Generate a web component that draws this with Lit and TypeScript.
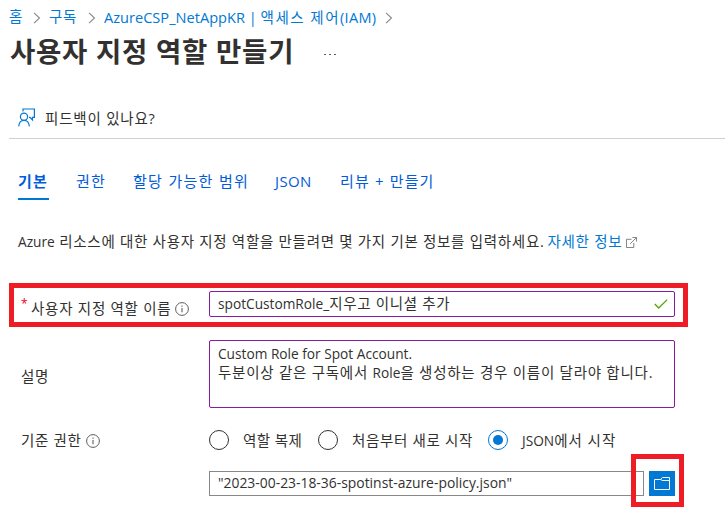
import { LitElement, html, css, svg } from "lit";
import { customElement } from "lit/decorators.js";

const chevron = svg`<svg class="chev" width="8" height="12" viewBox="0 0 8 12"><path d="M1 .8 6.5 6 1 11.2" fill="none" stroke="#8a8886" stroke-width="1.1"/></svg>`;
const info = svg`<svg class="info" width="14" height="14" viewBox="0 0 14 14"><circle cx="7" cy="7" r="6.4" fill="none" stroke="#605e5c" stroke-width="1"/><path d="M7 6v4.3M7 3.6v1.2" stroke="#605e5c" stroke-width="1.1"/></svg>`;

@customElement("app-root")
export class AppRoot extends LitElement {
  static styles = css`
    :host {
      display: block; position: relative; width: 725px; height: 514px; overflow: hidden;
      background: #fff; color: #323130; box-sizing: border-box;
      font: 400 14.5px/20px "Open Sans", "Noto Sans CJK KR", sans-serif;
      letter-spacing: .68px;
    }
    * { box-sizing: border-box; }
    div, span, h1, a { white-space: nowrap; }
    svg { display: block; flex: none; }
    .en { font-size: 13.7px; letter-spacing: 0; }
    .crumbs { display: flex; align-items: center; height: 34px; padding-left: 9px; color: #0078d4; }
    .crumbs .chev { margin-top: 1px; }
    .c0 { width: 24px; }
    .c1 { width: 39px; }
    .c2 { width: 281px; }
    .s { width: 16px; display: flex; }
    .crumbs .en { font-size: 14.6px; }
    .iam { letter-spacing: 1.5px; }
    .paren { letter-spacing: .3px; }
    .head { display: flex; height: 36px; align-items: center; padding-left: 10px; }
    h1 { margin: 0; width: 314px; font-size: 27.5px; line-height: 36px; font-weight: 700; letter-spacing: .75px; }
    .dots { display: flex; gap: 3px; margin-top: 4px; }
    .dots i { width: 2px; height: 1px; background: #605e5c; }
    .cmd { display: flex; align-items: center; height: 43px; margin: 26px 0 0 9px; padding-left: 9px; border-bottom: 1px solid #d2d0ce; }
    .cmd span { margin: 3px 0 0 9px; letter-spacing: .8px; }
    .tabs { display: flex; margin: 32px 0 0 18px; color: #015cda; font-size: 15px; letter-spacing: 1.15px; }
    .tab { height: 29px; line-height: 21px; }
    .t1 { width: 31px; margin-right: 27px; font-weight: 700; border-bottom: 2px solid #0078d4; }
    .t2 { width: 57px; }
    .t3 { width: 142px; letter-spacing: 1.3px; }
    .t4 { width: 65px; letter-spacing: .4px; }
    .intro { display: flex; align-items: center; height: 20px; margin: 32px 0 0 18px; letter-spacing: .72px; }
    .intro a { color: #0078d4; margin-left: 3px; }
    .intro svg { margin-left: 4px; }
    .row { display: flex; width: 666px; margin-left: 9px; }
    .label { display: flex; width: 200px; padding-left: 12px; align-items: center; }
    .field { flex: 1; border: 1px solid #881ba0; border-radius: 2px; padding: 0 8px; }
    .r1 { margin-top: 39px; height: 26px; }
    .r1 .label { padding-top: 10px; }
    .l1 { letter-spacing: .75px; }
    .req { color: #e3001b; width: 10px; margin-top: -10px; font-size: 12px; }
    .label .info { margin-left: 4px; }
    .r1 .field { display: flex; align-items: center; justify-content: space-between; padding-right: 6px; }
    .r2 { margin-top: 23px; height: 68px; }
    .r2 .label { padding-top: 5px; }
    .r2 .field { padding-top: 3px; line-height: 19px; }
    .ko { letter-spacing: .76px; }
    .r3 { margin-top: 22px; height: 20px; }
    .r3 .label { padding-top: 2px; }
    .radio { width: 20px; height: 20px; border: 1px solid #323130; border-radius: 50%; display: flex; align-items: center; justify-content: center; flex: none; }
    .radio.on { border-color: #0078d4; }
    .radio.on::after { content: ""; width: 10px; height: 10px; border-radius: 50%; background: #0078d4; }
    .opt { display: flex; align-items: center; }
    .opt > span { margin-left: 14px; padding-top: 2px; }
    .o1 { width: 109px; letter-spacing: .4px; }
    .o2 { width: 170px; }
    .o3 { letter-spacing: 1px; }
    .r4 { margin-top: 21px; height: 25px; padding-left: 200px; }
    .r4 .field { border-color: #8a8886; border-radius: 0; line-height: 22px; }
    .r4 .en { font-size: 13.9px; }
    .browse { width: 26px; height: 25px; margin-left: 5px; background: #0078d4; display: flex; align-items: center; justify-content: center; }
    .mark { position: absolute; border: 5px solid #ee1c25; }
    .m1 { left: 9px; top: 283px; width: 679px; height: 44px; }
    .m2 { left: 631px; top: 454px; width: 53px; height: 53px; }
  `;

  render() {
    return html`
      <div class="crumbs">
        <span class="c0">홈</span><span class="s">${chevron}</span>
        <span class="c1">구독</span><span class="s">${chevron}</span>
        <span class="c2"><span class="en">AzureCSP_NetAppKR | </span><span class="iam">액세스 제어</span><span class="paren">(IAM)</span></span><span class="s">${chevron}</span>
      </div>
      <div class="head"><h1>사용자 지정 역할 만들기</h1><span class="dots"><i></i><i></i><i></i></span></div>
      <div class="cmd">
        <svg width="18" height="19" viewBox="0 0 18 19" fill="none" stroke="#0078d4" stroke-width="1.2">
          <path d="M5 3.5V1H16.4V9.4H14.5V12L12 9.4H11"/><circle cx="6" cy="8.7" r="3.6"/><path d="M.7 18.4C1 14.6 3 12.4 6 12.4S11 14.6 11.4 18.4"/>
        </svg>
        <span>피드백이 있나요?</span>
      </div>
      <div class="tabs">
        <span class="tab t1">기본</span><span class="tab t2">권한</span><span class="tab t3">할당 가능한 범위</span><span class="tab t4">JSON</span><span class="tab t5">리뷰 + 만들기</span>
      </div>
      <div class="intro">
        <span><span class="en">Azure</span> 리소스에 대한 사용자 지정 역할을 만들려면 몇 가지 기본 정보를 입력하세요.</span><a>자세한 정보</a>
        <svg width="11" height="11" viewBox="0 0 12 12" fill="none" stroke="#797775"><path d="M6 2.5H.5v9h8V6.5M7 .5h4.5V5M11.3.7 4.5 7.5"/></svg>
      </div>
      <div class="row r1">
        <div class="label"><span class="req">*</span><span class="l1">사용자 지정 역할 이름</span>${info}</div>
        <div class="field"><span><span class="en">spotCustomRole_</span>지우고 이니셜 추가</span>
          <svg width="14" height="10" viewBox="0 0 14 10"><path d="M.8 5 4.7 9 13.2.6" fill="none" stroke="#57a300" stroke-width="1.3"/></svg>
        </div>
      </div>
      <div class="row r2">
        <div class="label"><span>설명</span></div>
        <div class="field"><div class="en">Custom Role for Spot Account.</div><div class="ko">두분이상 같은 구독에서 <span class="en">Role</span>을 생성하는 경우 이름이 달라야 합니다.</div></div>
      </div>
      <div class="row r3">
        <div class="label"><span>기준 권한</span>${info}</div>
        <div class="opt o1"><i class="radio"></i><span>역할 복제</span></div>
        <div class="opt o2"><i class="radio"></i><span>처음부터 새로 시작</span></div>
        <div class="opt o3"><i class="radio on"></i><span><span class="en">JSON</span>에서 시작</span></div>
      </div>
      <div class="row r4">
        <div class="field"><span class="en">"2023-00-23-18-36-spotinst-azure-policy.json"</span></div>
        <div class="browse"><svg width="16" height="13" viewBox="0 0 16 13" fill="none" stroke="#fff"><path d="M8.5 3.5H15.5V12.5H.5V2.5H6.5L8.5.5H15.5V3.5H8.5L6.5 2.5"/></svg></div>
      </div>
      <div class="mark m1"></div>
      <div class="mark m2"></div>
    `;
  }
}
